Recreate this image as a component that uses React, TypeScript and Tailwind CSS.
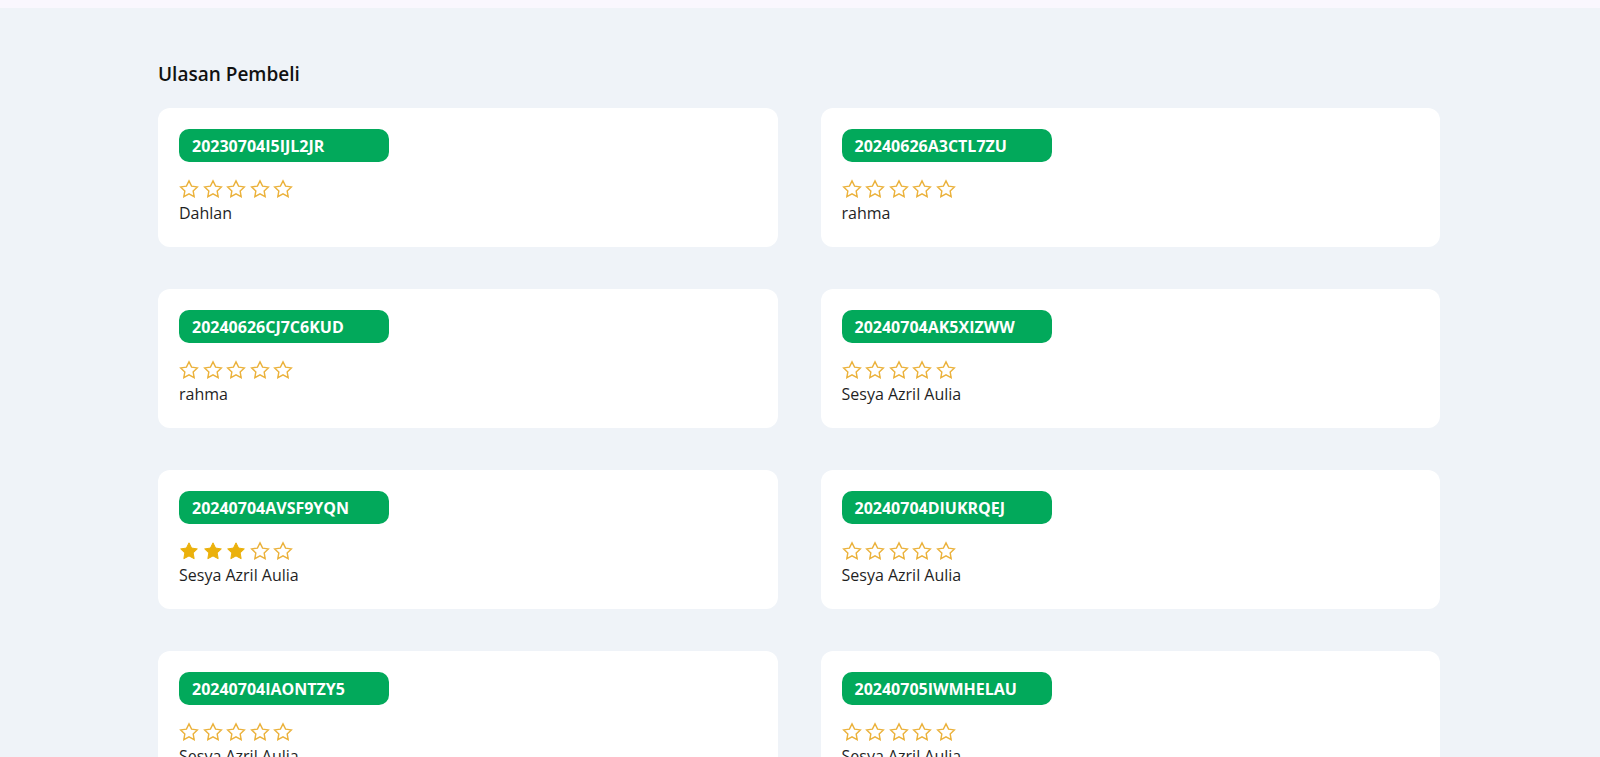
import React from 'react';

type Review = {
  code: string;
  rating: number;
  name: string;
};

const reviews: Review[] = [
  { code: '20230704I5IJL2JR', rating: 0, name: 'Dahlan' },
  { code: '20240626A3CTL7ZU', rating: 0, name: 'rahma' },
  { code: '20240626CJ7C6KUD', rating: 0, name: 'rahma' },
  { code: '20240704AK5XIZWW', rating: 0, name: 'Sesya Azril Aulia' },
  { code: '20240704AVSF9YQN', rating: 3, name: 'Sesya Azril Aulia' },
  { code: '20240704DIUKRQEJ', rating: 0, name: 'Sesya Azril Aulia' },
  { code: '20240704IAONTZY5', rating: 0, name: 'Sesya Azril Aulia' },
  { code: '20240705IWMHELAU', rating: 0, name: 'Sesya Azril Aulia' },
];

function Star({ filled }: { filled: boolean }) {
  return (
    <svg viewBox="0 0 24 24" className="h-5 w-5">
      <polygon
        points="12,2.2 15.1,8.5 22,9.5 17,14.3 18.2,21.2 12,17.9 5.8,21.2 7,14.3 2,9.5 8.9,8.5"
        fill={filled ? '#ebb10c' : 'none'}
        stroke={filled ? '#ebb10c' : '#ebb23c'}
        strokeWidth={filled ? 1.2 : 1.7}
        strokeLinejoin="miter"
      />
    </svg>
  );
}

function ReviewCard({ review }: { review: Review }) {
  return (
    <div className="flex h-[139px] flex-col rounded-xl bg-white px-[21px] pt-[21px]">
      <div className="flex h-[33px] w-[210px] items-center rounded-[10px] bg-[#02a95b] pl-[13px] text-base font-bold text-white">
        {review.code}
      </div>
      <div className="mt-[17px] flex gap-[3.5px]">
        {[1, 2, 3, 4, 5].map((i) => (
          <Star key={i} filled={i <= review.rating} />
        ))}
      </div>
      <p className="mt-[2px] text-base leading-6 text-[#1f1f1f]">{review.name}</p>
    </div>
  );
}

export default function App() {
  return (
    <div
      className="h-screen overflow-hidden bg-[#eff3f8]"
      style={{ fontFamily: '"Open Sans", "Noto Sans", sans-serif' }}
    >
      <div className="h-2 bg-[#faf7fe]" />
      <div className="ml-[158px] w-[1282px] pt-[52px]">
        <h2 className="mb-5 text-[19px] leading-7 font-semibold text-[#111]">Ulasan Pembeli</h2>
        <div className="grid grid-cols-2 gap-x-[43px] gap-y-[42px]">
          {reviews.map((r) => (
            <ReviewCard key={r.code} review={r} />
          ))}
        </div>
      </div>
    </div>
  );
}
